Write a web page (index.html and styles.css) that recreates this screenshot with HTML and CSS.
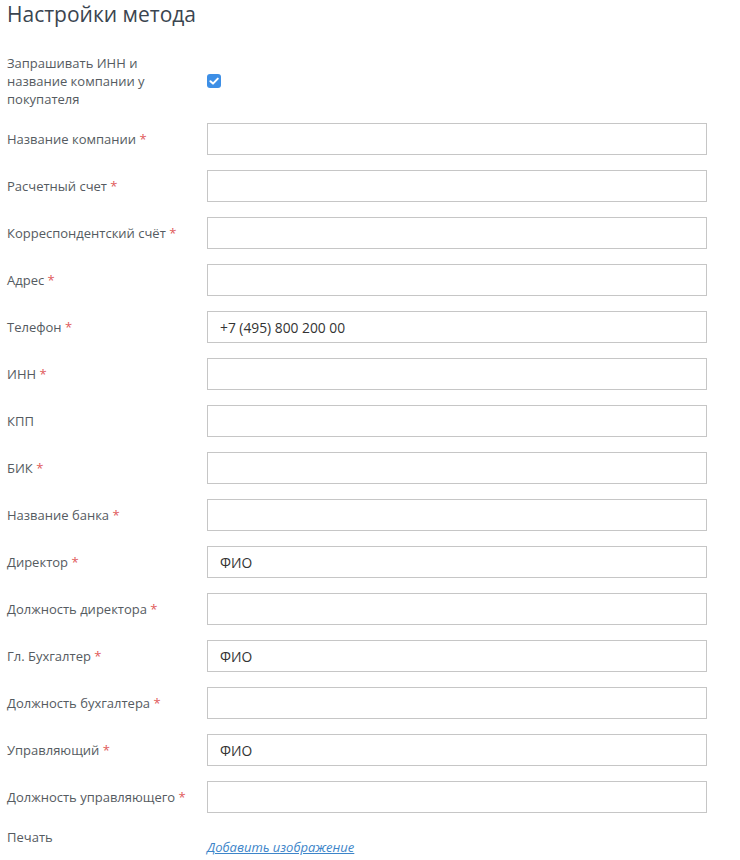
FILE: index.html
```html
<!DOCTYPE html>
<html lang="ru">
<head>
  <meta charset="UTF-8">
  <meta name="viewport" content="width=device-width, initial-scale=1.0">
  <title>Настройки метода</title>
  <link rel="stylesheet" href="styles.css">
</head>
<body>
  <div class="settings">
    <h1 class="settings-title">Настройки метода</h1>
    <form class="settings-form">
      <div class="field field-check">
        <label class="field-label" for="ask-inn">Запрашивать ИНН и название компании у покупателя</label>
        <div class="field-value">
          <span class="checkbox">
            <svg viewBox="0 0 14 14" width="14" height="14"><path d="M3.4 7.2 L6 9.6 L10.8 4.6" fill="none" stroke="#fff" stroke-width="2" stroke-linecap="round" stroke-linejoin="round"/></svg>
          </span>
        </div>
      </div>
      <div class="field">
        <label class="field-label">Название компании <span class="req">*</span></label>
        <input class="field-input" type="text">
      </div>
      <div class="field">
        <label class="field-label">Расчетный счет <span class="req">*</span></label>
        <input class="field-input" type="text">
      </div>
      <div class="field">
        <label class="field-label">Корреспондентский счёт <span class="req">*</span></label>
        <input class="field-input" type="text">
      </div>
      <div class="field">
        <label class="field-label">Адрес <span class="req">*</span></label>
        <input class="field-input" type="text">
      </div>
      <div class="field">
        <label class="field-label">Телефон <span class="req">*</span></label>
        <input class="field-input" type="text" value="+7 (495) 800 200 00">
      </div>
      <div class="field">
        <label class="field-label">ИНН <span class="req">*</span></label>
        <input class="field-input" type="text">
      </div>
      <div class="field">
        <label class="field-label">КПП</label>
        <input class="field-input" type="text">
      </div>
      <div class="field">
        <label class="field-label">БИК <span class="req">*</span></label>
        <input class="field-input" type="text">
      </div>
      <div class="field">
        <label class="field-label">Название банка <span class="req">*</span></label>
        <input class="field-input" type="text">
      </div>
      <div class="field">
        <label class="field-label">Директор <span class="req">*</span></label>
        <input class="field-input" type="text" value="ФИО">
      </div>
      <div class="field">
        <label class="field-label">Должность директора <span class="req">*</span></label>
        <input class="field-input" type="text">
      </div>
      <div class="field">
        <label class="field-label">Гл. Бухгалтер <span class="req">*</span></label>
        <input class="field-input" type="text" value="ФИО">
      </div>
      <div class="field">
        <label class="field-label">Должность бухгалтера <span class="req">*</span></label>
        <input class="field-input" type="text">
      </div>
      <div class="field">
        <label class="field-label">Управляющий <span class="req">*</span></label>
        <input class="field-input" type="text" value="ФИО">
      </div>
      <div class="field">
        <label class="field-label">Должность управляющего <span class="req">*</span></label>
        <input class="field-input" type="text">
      </div>
      <div class="field field-stamp">
        <label class="field-label">Печать</label>
        <div class="field-value">
          <a class="add-link" href="#">Добавить изображение</a>
        </div>
      </div>
    </form>
  </div>
</body>
</html>
```

FILE: styles.css
```css
body {
  margin: 0;
  font-family: "Open Sans", "Noto Sans", sans-serif;
  color: #555b61;
  background: #fff;
}
.settings {
  padding: 0 7px;
}
.settings-title {
  margin: 0;
  font-size: 21px;
  font-weight: 400;
  line-height: 29px;
  color: #3b4550;
}
.settings-form {
  display: flex;
  flex-direction: column;
  gap: 15px;
  margin-top: 25px;
}
.field {
  display: flex;
  align-items: center;
}
.field-label {
  width: 190px;
  margin-right: 10px;
  font-size: 13px;
  line-height: 18px;
  flex-shrink: 0;
}
.req {
  color: #e05a5a;
}
.field-input {
  box-sizing: border-box;
  width: 500px;
  height: 32px;
  padding: 0 12px;
  border: 1px solid #c6c6c6;
  border-radius: 0;
  font-family: inherit;
  font-size: 13.8px;
  color: #333;
  outline: none;
}
.checkbox {
  display: flex;
  align-items: center;
  justify-content: center;
  width: 14px;
  height: 14px;
  border-radius: 3px;
  background: #3d8fe6;
}
.field-stamp {
  align-items: flex-start;
}
.field-value {
  display: flex;
}
.field-stamp .field-value {
  padding-top: 10px;
}
.add-link {
  font-size: 13px;
  font-style: italic;
  color: #3d85c9;
  text-decoration: underline;
}
```
